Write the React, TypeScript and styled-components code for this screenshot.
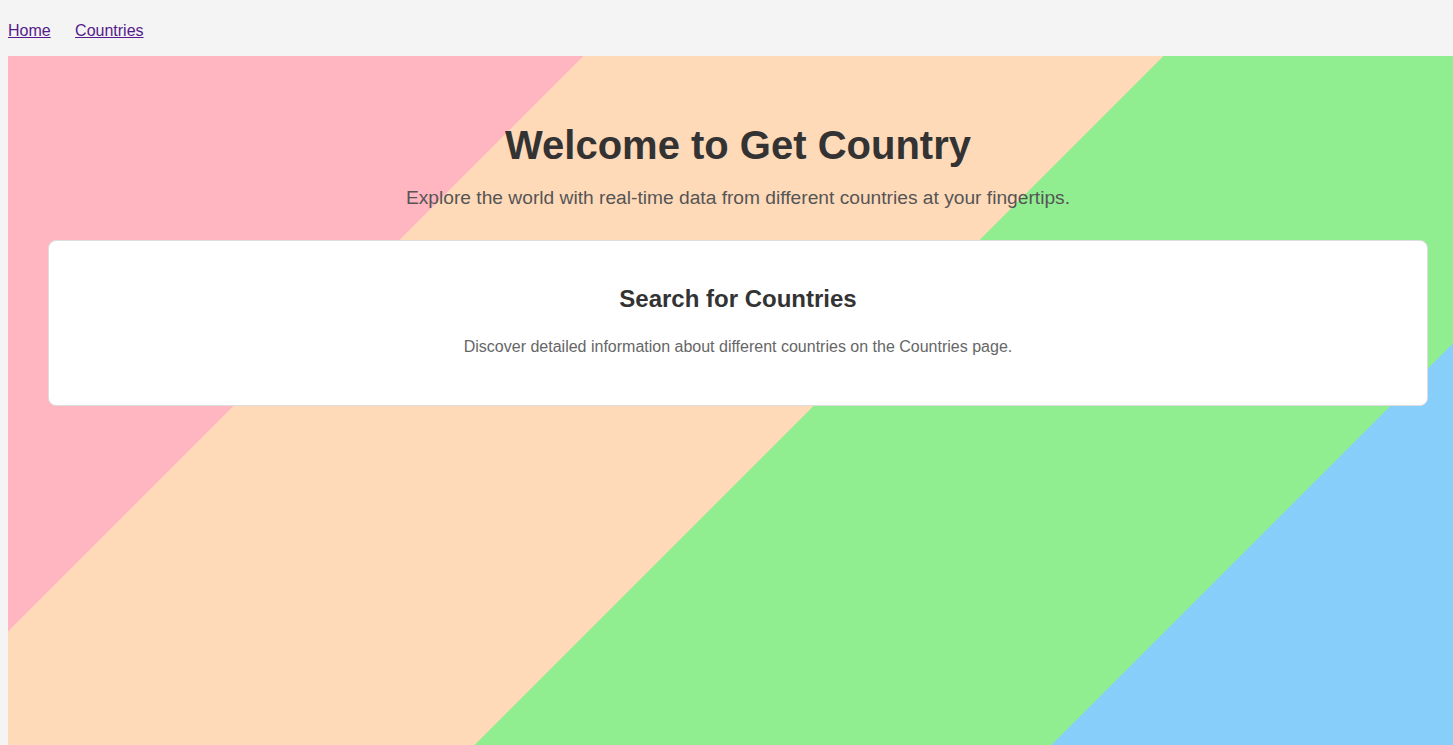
import React from "react";
import styled, { createGlobalStyle } from "styled-components";

const GlobalStyle = createGlobalStyle`
  html, body {
    margin: 0;
    padding: 0;
    overflow: hidden;
    background: #f4f4f4;
    font-family: "Liberation Sans", Arial, sans-serif;
  }
`;

const Page = styled.div`
  padding: 0 0 0 8px;
`;

const Nav = styled.nav`
  height: 56px;
  box-sizing: border-box;
  padding-top: 22px;
`;

const NavList = styled.ul`
  list-style: none;
  margin: 0;
  padding: 0;
  display: flex;
  gap: 24.4px;
`;

const NavLink = styled.a`
  color: #551a8b;
  font-size: 16px;
  line-height: 18.4px;
  text-decoration: underline;
`;

const Hero = styled.main`
  width: calc(100vw + 7px);
  min-height: 100vh;
  box-sizing: border-box;
  padding: 40px 40px;
  text-align: center;
  background: linear-gradient(
    135deg,
    #ffb6c1 0 407px,
    #ffdab9 407px 817px,
    #90ee90 817px 1225px,
    #87cefa 1225px
  );
`;

const Title = styled.h1`
  margin: 26px 0 19px;
  font-size: 40px;
  line-height: 46px;
  font-weight: bold;
  color: #333;
`;

const Subtitle = styled.p`
  margin: 0;
  font-size: 19.2px;
  line-height: 22px;
  color: #555;
`;

const Card = styled.section`
  margin-top: 31px;
  background: #fff;
  border: 1px solid #ddd;
  border-radius: 8px;
  padding: 20px;
`;

const CardTitle = styled.h2`
  margin: 24px 0 25px;
  font-size: 24px;
  line-height: 27.6px;
  font-weight: bold;
  color: #333;
`;

const CardText = styled.p`
  margin: 0 0 29px;
  font-size: 16px;
  line-height: 18.4px;
  color: #666;
`;

export default function App() {
  return (
    <>
      <GlobalStyle />
      <Page>
        <Nav>
          <NavList>
            <li>
              <NavLink href="#">Home</NavLink>
            </li>
            <li>
              <NavLink href="#">Countries</NavLink>
            </li>
          </NavList>
        </Nav>
        <Hero>
          <Title>Welcome to Get Country</Title>
          <Subtitle>
            Explore the world with real-time data from different countries at your fingertips.
          </Subtitle>
          <Card>
            <CardTitle>Search for Countries</CardTitle>
            <CardText>
              Discover detailed information about different countries on the Countries page.
            </CardText>
          </Card>
        </Hero>
      </Page>
    </>
  );
}
